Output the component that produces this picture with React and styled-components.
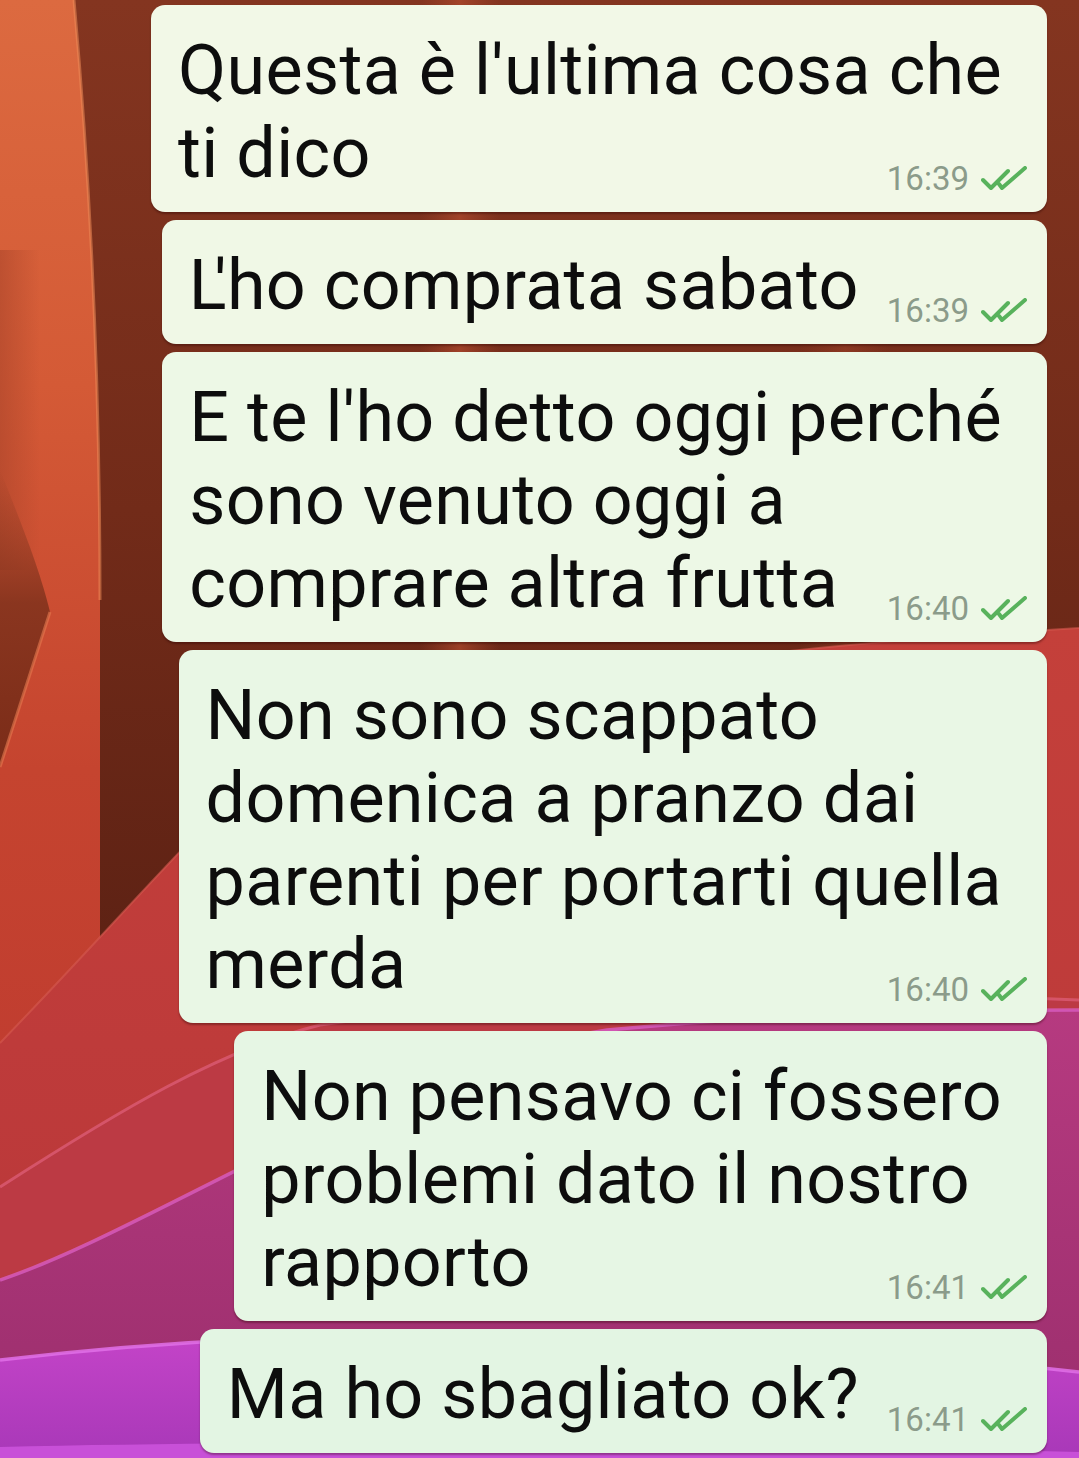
import React from "react";
import styled, { createGlobalStyle } from "styled-components";

const GlobalStyle = createGlobalStyle`
  html, body { margin: 0; padding: 0; background: #6a2818; }
  body { font-family: Roboto, "Noto Sans", sans-serif; }
`;

const Screen = styled.main`
  display: grid;
  width: 1079px;
  height: 1458px;
  overflow: hidden;
  background: #6c2818;
  & > * { grid-area: 1 / 1; }
`;

const Wallpaper = styled.svg`
  display: block;
  width: 1079px;
  height: 1458px;
`;

const Thread = styled.section`
  display: flex;
  flex-direction: column;
  align-items: flex-end;
  gap: 8px;
  padding: 5px 32px 0 0;
  min-width: 0;
`;

const Bubble = styled.article`
  background: ${(p) => p.$tone};
  border-radius: 14px;
  padding: 24px 20px 17px 27px;
  box-shadow: 0 2px 2px rgba(40, 0, 0, 0.35);
  font-family: Roboto, "Noto Sans", sans-serif;
  font-size: 70px;
  line-height: 83px;
  letter-spacing: 0.35px;
  color: #0d0d0d;
  white-space: nowrap;
`;

const Kern = styled.span`
  letter-spacing: -12px;
`;

const Line = styled.div`
  padding-right: 25px;
`;

const LastRow = styled.div`
  display: flex;
  align-items: flex-end;
  gap: 28px;
`;

const Meta = styled.div`
  margin-left: auto;
  display: flex;
  align-items: center;
  gap: 12px;
  font-size: 33px;
  line-height: 33px;
  letter-spacing: 0;
  color: #8b9b8a;
`;

const Ticks = () => (
  <svg width="46" height="26" viewBox="0 0 46 26" fill="none">
    <path d="M2 14 L10 22 L27 5" stroke="#58b25c" strokeWidth="4" strokeLinecap="round" strokeLinejoin="round" />
    <path d="M18 18 L21 22 L44 2" stroke="#58b25c" strokeWidth="4" strokeLinecap="round" strokeLinejoin="round" />
  </svg>
);

const messages = [
  { lines: ["Questa è l'ultima cosa che"], last: "ti dico", time: "16:39", tone: "#f2f8e7" },
  { lines: [], last: (<><Kern>L</Kern>'ho comprata sabato</>), time: "16:39", tone: "#f0f8e6" },
  { lines: ["E te l'ho detto oggi perché", "sono venuto oggi a"], last: "comprare altra frutta", time: "16:40", tone: "#edf8e6" },
  { lines: ["Non sono scappato", "domenica a pranzo dai", "parenti per portarti quella"], last: "merda", time: "16:40", tone: "#e9f7e5" },
  { lines: ["Non pensavo ci fossero", "problemi dato il nostro"], last: "rapporto", time: "16:41", tone: "#e6f6e4" },
  { lines: [], last: "Ma ho sbagliato ok?", time: "16:41", tone: "#e3f5e3" },
];

const Background = () => (
  <Wallpaper viewBox="0 0 1079 1458" preserveAspectRatio="none">
    <defs>
      <linearGradient id="base" x1="0" y1="0" x2="0" y2="1">
        <stop offset="0" stopColor="#843520" />
        <stop offset="0.35" stopColor="#722b19" />
        <stop offset="0.65" stopColor="#5e2214" />
        <stop offset="1" stopColor="#5a2014" />
      </linearGradient>
      <linearGradient id="soft" x1="0" y1="0" x2="1" y2="0">
        <stop offset="0" stopColor="#a5452a" stopOpacity="0" />
        <stop offset="0.5" stopColor="#b04a2e" stopOpacity="0.7" />
        <stop offset="1" stopColor="#a5452a" stopOpacity="0" />
      </linearGradient>
      <linearGradient id="orange" x1="0" y1="0" x2="0" y2="1">
        <stop offset="0" stopColor="#dc6a40" />
        <stop offset="0.35" stopColor="#d45a36" />
        <stop offset="0.7" stopColor="#c5442f" />
        <stop offset="1" stopColor="#c03c30" />
      </linearGradient>
      <linearGradient id="orangeSide" x1="0" y1="0" x2="1" y2="0">
        <stop offset="0" stopColor="#a8442a" stopOpacity="0.55" />
        <stop offset="1" stopColor="#a8442a" stopOpacity="0" />
      </linearGradient>
      <linearGradient id="wedge" x1="0" y1="0" x2="0" y2="1">
        <stop offset="0" stopColor="#8a3a22" stopOpacity="0" />
        <stop offset="0.45" stopColor="#83331d" stopOpacity="0.9" />
        <stop offset="1" stopColor="#7a2c18" stopOpacity="1" />
      </linearGradient>
      <linearGradient id="red" x1="0" y1="0" x2="0" y2="1">
        <stop offset="0" stopColor="#c4403a" />
        <stop offset="1" stopColor="#b8363a" />
      </linearGradient>
      <linearGradient id="magenta" x1="0" y1="0" x2="0" y2="1">
        <stop offset="0" stopColor="#b63a80" />
        <stop offset="1" stopColor="#9a2e6c" />
      </linearGradient>
      <linearGradient id="purple" x1="0" y1="0" x2="0" y2="1">
        <stop offset="0" stopColor="#c444c8" />
        <stop offset="1" stopColor="#a838b8" />
      </linearGradient>
    </defs>
    <rect width="1079" height="1458" fill="url(#base)" />
    <rect x="420" y="0" width="80" height="720" fill="url(#soft)" />
    <rect x="800" y="300" width="90" height="400" fill="url(#soft)" opacity="0.5" />
    <path d="M0 0 L74 0 C92 200 100 400 100 600 L100 1100 L0 1100 Z" fill="url(#orange)" />
    <rect x="0" y="250" width="40" height="320" fill="url(#orangeSide)" />
    <path d="M0 470 C20 520 40 570 50 612 L0 767 Z" fill="url(#wedge)" />
    <path d="M74 0 C92 200 100 400 100 600" stroke="#ec8a58" strokeWidth="3" fill="none" opacity="0.55" />
    <path d="M0 767 L50 612" stroke="#e67a50" strokeWidth="3" fill="none" opacity="0.6" />
    <path d="M0 1043 C90 950 160 870 230 800 C400 690 700 650 1079 628 L1079 1458 L0 1458 Z" fill="url(#red)" />
    <path d="M0 1043 C90 950 160 870 230 800 C400 690 700 650 1079 628" stroke="#d65a50" strokeWidth="2" fill="none" opacity="0.6" />
    <path d="M0 1187 C120 1110 220 1050 320 1025 C600 985 850 990 1079 1000 L1079 1458 L0 1458 Z" fill="#bc3a44" />
    <path d="M0 1187 C120 1110 220 1050 320 1025 C600 985 850 990 1079 1000" stroke="#e0607a" strokeWidth="3" fill="none" opacity="0.7" />
    <path d="M0 1280 C150 1230 400 1060 607 1030 C800 1012 950 1010 1079 1010 L1079 1458 L0 1458 Z" fill="url(#magenta)" />
    <path d="M0 1280 C150 1230 400 1060 607 1030 C800 1012 950 1010 1079 1010" stroke="#d85cc0" strokeWidth="3.5" fill="none" opacity="0.8" />
    <path d="M0 1360 C250 1330 600 1318 1079 1372 L1079 1458 L0 1458 Z" fill="url(#purple)" />
    <path d="M0 1360 C250 1330 600 1318 1079 1372" stroke="#e070e8" strokeWidth="3.5" fill="none" opacity="0.85" />
    <path d="M0 1447 C300 1440 700 1442 1079 1452 L1079 1458 L0 1458 Z" fill="#c850d8" />
  </Wallpaper>
);

export default function App() {
  return (
    <>
      <GlobalStyle />
      <Screen>
        <Background />
        <Thread>
          {messages.map((m, i) => (
            <Bubble key={i} $tone={m.tone}>
              {m.lines.map((l, j) => (
                <Line key={j}>{l}</Line>
              ))}
              <LastRow>
                <span>{m.last}</span>
                <Meta>
                  <span>{m.time}</span>
                  <Ticks />
                </Meta>
              </LastRow>
            </Bubble>
          ))}
        </Thread>
      </Screen>
    </>
  );
}
